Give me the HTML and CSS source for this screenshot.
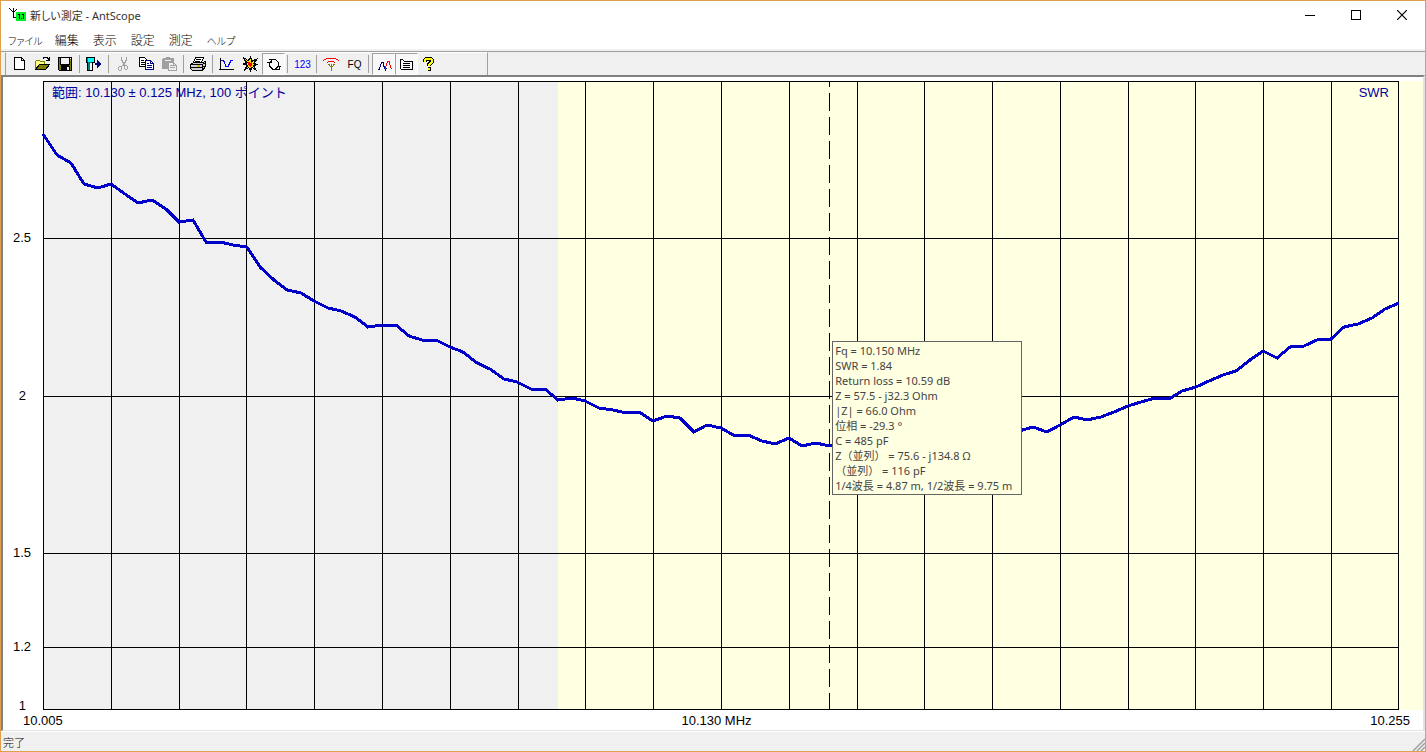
FILE: index.html
```html
<!DOCTYPE html>
<html lang="ja">
<head>
<meta charset="utf-8">
<title>新しい測定 - AntScope</title>
<link rel="stylesheet" href="styles.css">
</head>
<body>
<div class="window">
  <header class="titlebar">
    <svg class="app-icon" width="18" height="16" viewBox="0 0 18 16" shape-rendering="crispEdges" aria-hidden="true">
      <path d="M0 1h1v1h1v1h1v1h1V1h1v3h1V3h1V2h1v1H7v1H6v1H5v5h3v1H4V5H3V4H2V3H1V2H0z" fill="#000"/>
      <rect x="7" y="5" width="10" height="9" fill="#00f020"/>
      <path d="M9 7h2v5h-1V8H9zM12 11h1v1h-1zM13 7h2v5h-1V8h-1z" fill="#000"/>
    </svg>
    <h1 class="title">新しい測定 - AntScope</h1>
    <div class="window-controls">
      <button class="control" aria-label="最小化"><svg width="10" height="10" shape-rendering="crispEdges"><path d="M0 5.500h10" stroke="#000"/></svg></button>
      <button class="control" aria-label="最大化"><svg width="10" height="10" shape-rendering="crispEdges"><path d="M.5.5h9v9h-9z" fill="none" stroke="#000"/></svg></button>
      <button class="control" aria-label="閉じる"><svg width="10" height="10"><path d="M0 0l10 10M10 0L0 10" stroke="#000" stroke-width="1.200"/></svg></button>
    </div>
  </header>

  <nav class="menubar">
    <button class="menu menu-kana">ファイル</button>
    <button class="menu">編集</button>
    <button class="menu">表示</button>
    <button class="menu">設定</button>
    <button class="menu">測定</button>
    <button class="menu menu-kana">ヘルプ</button>
  </nav>

  <div class="toolbar" role="toolbar">
    <div class="toolband">
      <button class="tool" aria-label="新規"><svg class="icon" viewBox="0 0 16 16"><path d="M3.500 1.500h7l3 3v9h-10z" fill="#fff" stroke="#000"/><path d="M10.500 1.500v3h3" fill="none" stroke="#000"/></svg></button>
      <button class="tool" aria-label="開く"><svg class="icon" viewBox="0 0 16 16"><path d="M1.500 13V5.500l1-1h3l1 1h4v3h-5z" fill="#ffff80" stroke="#808000"/><path d="M1.500 13.500l4-5h10l-4 5z" fill="#808000" stroke="#000"/><path d="M9 2.500l1-1h3l2 2M15.500 1v3.500H12" fill="none" stroke="#000"/></svg></button>
      <button class="tool" aria-label="保存"><svg class="icon" viewBox="0 0 16 16"><path d="M1.500 1.500h13v13h-12l-1-1z" fill="#808000" stroke="#000"/><path d="M4 2h8v6H4z" fill="#f0f0f0"/><path d="M3.500 2v6.500h9V2M4 9.500h8" fill="none" stroke="#000"/><path d="M4 10h9v4H4z" fill="#000"/><path d="M10 11h2v3h-2zM13 2h1v1h-1z" fill="#f0f0f0"/></svg></button>
      <span class="sep"></span>
      <button class="tool" aria-label="エクスポート"><svg class="icon" viewBox="0 0 16 16"><path d="M.5 1.500h8v5h-2v8h-5v-8h-1z" fill="#008080" stroke="#000"/><path d="M2 2h6v4H2z" fill="#00ffff"/><path d="M4 7h2v7H4z" fill="#fff"/><path d="M9 7h2V4h1v1h1v1h1v1h1v2h-1v1h-1v1h-1v1h-1V9H9z" fill="#000080"/></svg></button>
      <span class="sep"></span>
      <button class="tool" aria-label="切り取り"><svg class="icon" viewBox="0 0 16 16"><path d="M6.500 1v3l4 6M11.500 1v3l-4 6" fill="none" stroke="#a0a0a0" stroke-width="1.400"/><path d="M4.500 10.500h2v3l-1 1h-1l-1-1v-2zM10.500 9.500h1l1 1v2l-1 1h-1l-1-1v-2z" fill="none" stroke="#a0a0a0"/></svg></button>
      <button class="tool" aria-label="コピー"><svg class="icon" viewBox="0 0 16 16"><path d="M1.500 1.500h5l3 3v6h-8z" fill="#fff" stroke="#000"/><path d="M3 4.500h3M3 6.500h4M3 8.500h4" stroke="#000"/><path d="M7.500 4.500h5l3 3v6h-8z" fill="#fff" stroke="#000080"/><path d="M12.500 4.500v3h3M9 7.500h2M9 9.500h5M9 11.500h5" fill="none" stroke="#000080"/></svg></button>
      <button class="tool" aria-label="貼り付け"><svg class="icon" viewBox="0 0 16 16"><path d="M1 3l1-1h3V1h4v1h3l1 1v10H1z" fill="#a0a0a0"/><path d="M4 4.500h6" stroke="#f0f0f0"/><path d="M7.500 6.500h5l3 3v5h-8z" fill="#f0f0f0" stroke="#a0a0a0"/><path d="M9 9.500h3M9 11.500h5M12.500 7v2.500h3" fill="none" stroke="#a0a0a0"/></svg></button>
      <span class="sep"></span>
      <button class="tool" aria-label="印刷"><svg class="icon" viewBox="0 0 16 16"><path d="M5.500 1.500h8l-2 5h-8z" fill="#fff" stroke="#000"/><path d="M6 3.500h5M5 5.500h5" stroke="#000"/><path d="M.5 8.500l3-2h9l3-1v5l-3 4h-10l-2-2z" fill="#d0d0d0" stroke="#000"/><path d="M1 8.500h11.500v5M1 11.500h12M12.500 8.500l3-2M12.500 11.500l3-2" fill="none" stroke="#000"/><path d="M7 10h3" stroke="#d0c000" stroke-width="2"/></svg></button>
      <span class="sep"></span>
      <button class="tool" aria-label="グラフ"><svg class="icon" viewBox="0 0 16 16"><path d="M1.500 2v12M0 13.500h15" stroke="#000"/><path d="M2 4.500h2l1 1 2 5h2l3-6h2" fill="none" stroke="#0000ff"/></svg></button>
      <button class="tool" aria-label="測定開始"><svg class="icon" viewBox="0 0 16 16"><path d="M1 1l5 4 2.500-4L10 5l5-2-2.500 4 2.500 1.500-3 1.500 2 4-4-2.500L8.500 15 7 11.500 2.500 14 5 9.500 1.500 8 4 6.500z" fill="#000" stroke="#000"/><path d="M2.500 2.500L6 6l2.500-3.500L9.500 6l3.500-1.500-2 3L13 9l-2.500.5 1.500 3-3-2-1 2.500-1-2.500L5 12l1.500-3L4 8l1.500-1.500z" fill="#ffe000"/><path d="M6 6h1l1 1 2-1v3l-2 2-2-2z" fill="#ff0000"/></svg></button>
      <button class="tool pressed" aria-label="連続測定" aria-pressed="true"><svg class="icon" viewBox="0 0 16 16"><path d="M3.500 10V6.500l3-3h3l3 3V10l-3 3h-3zM1 6.500h4M14.500 10.500h-4M9.500 13.500h4v-3M2.500 3.500h3v3" fill="none" stroke="#000"/></svg></button>
      <span class="sep"></span>
      <button class="tool tool-number">123</button>
      <span class="sep"></span>
      <button class="tool" aria-label="アンテナ"><svg class="icon" viewBox="0 0 16 16"><path d="M.5 5l1-1.500L4 2.500h8l2.500 1L15.500 5M3.500 7.500l1-1 1.500-1h4l1.500 1 1 1" fill="none" stroke="#ff0000"/><path d="M8.500 8v7M5.500 8l3 3.500 3-3.500" fill="none" stroke="#808000"/></svg></button>
      <button class="tool">FQ</button>
      <span class="sep"></span>
      <button class="tool pressed" aria-label="曲線" aria-pressed="true"><svg class="icon" viewBox="0 0 16 16"><path d="M8.500 13l1-1 2-6.500h2l1 6 1 1.500" fill="none" stroke="#ff0000"/><path d="M2.500 14l1-1 2-6.500h1.500l1.500 6 1 1.500 1-2" fill="none" stroke="#000080"/></svg></button>
      <button class="tool pressed" aria-label="凡例" aria-pressed="true"><svg class="icon" viewBox="0 0 16 16"><path d="M1.500 3.500v9l1 1h11v-8h-8l-2-2zM4 7.500h7M4 9.500h7M4 11.500h7" fill="none" stroke="#000"/></svg></button>
      <button class="tool" aria-label="ヘルプ"><svg class="icon" viewBox="0 0 16 16"><path d="M4 6V4l2-1.500h3L11 4v2L8 8.500V10M6.500 13h3" fill="none" stroke="#000" stroke-width="4"/><path d="M4 5.500V4l2-1.500h3L11 4v2L8 8.500V10M7 13h2" fill="none" stroke="#ffff00" stroke-width="2"/></svg></button>
    </div>
  </div>

  <main class="chart">
    <div class="y-axis">
      <span class="tick">2.5</span>
      <span class="tick">2</span>
      <span class="tick">1.5</span>
      <span class="tick">1.2</span>
      <span class="tick tick-base">1</span>
    </div>
    <div class="plot">
      <svg class="plot-lines" viewBox="0 0 1356 629" preserveAspectRatio="none" role="img" aria-label="SWR 10.005–10.255 MHz">
        <rect class="out-of-band" width="515" height="629"/>
        <path class="grid" d="M.5 0v629M68.500 0v629M136.500 0v629M203.500 0v629M271.500 0v629M339.500 0v629M407.500 0v629M475.500 0v629M542.500 0v629M610.500 0v629M678.500 0v629M746.500 0v629M814.500 0v629M881.500 0v629M949.500 0v629M1017.500 0v629M1085.500 0v629M1152.500 0v629M1220.500 0v629M1288.500 0v629M1355.500 0v629M0 .5h1356M0 157.500h1356M0 315.500h1356M0 472.500h1356M0 566.500h1356M0 628.500h1356"/>
        <path class="cursor" d="M786.500 0v629"/>
        <polyline class="curve" points="0,53 14,74 28,82 41,103 55,107 68,103 82,113 95,122 109,119 123,128 136,141 150,139 163,161 177,161 190,164 204,166 217,186 231,199 244,209 258,212 271,220 285,227 298,230 312,236 325,246 339,244 353,244 366,255 379,259 393,259 407,266 420,271 434,282 447,288 461,298 474,301 488,308 502,308 515,319 529,317 542,320 556,327 570,329 583,332 596,331 610,340 624,335 637,337 651,351 664,344 678,347 692,355 705,354 719,360 732,363 746,357 759,365 773,362 786,365 976,350 990,346 1004,351 1017,344 1031,336 1044,339 1058,336 1071,331 1085,325 1098,321 1112,317 1126,318 1139,310 1153,306 1166,300 1180,294 1193,290 1207,279 1220,270 1234,277 1247,266 1261,265 1274,259 1288,258 1301,246 1315,243 1329,237 1342,228 1356,222"/>
      </svg>
      <div class="caption">
        <span>範囲: 10.130 ± 0.125 MHz, 100 ポイント</span>
        <span>SWR</span>
      </div>
      <div class="tooltip" role="tooltip">
        <div>Fq = 10.150 MHz</div>
        <div>SWR = 1.84</div>
        <div>Return loss = 10.59 dB</div>
        <div>Z = 57.5 - j32.3 Ohm</div>
        <div>|Z| = 66.0 Ohm</div>
        <div>位相 = -29.3 °</div>
        <div>C = 485 pF</div>
        <div>Z（並列） = 75.6 - j134.8 Ω</div>
        <div>（並列） = 116 pF</div>
        <div>1/4波長 = 4.87 m, 1/2波長 = 9.75 m</div>
      </div>
    </div>
    <div class="plot-margin"></div>
    <div class="x-axis">
      <span>10.005</span>
      <span>10.130 MHz</span>
      <span>10.255</span>
    </div>
  </main>

  <footer class="statusbar">
    <span>完了</span>
    <svg class="grip" width="13" height="13" viewBox="0 0 13 13" aria-hidden="true"><path d="M1 13L13 1M5 13l8-8M9 13l4-4" stroke="#a0a0a0" stroke-width="1.500"/></svg>
  </footer>
</div>
</body>
</html>
```
FILE: styles.css
```css
* {
  box-sizing: border-box;
}

body {
  margin: 0;
  font-family: "Noto Sans", "Noto Sans CJK JP", sans-serif;
  font-size: 12px;
  font-weight: 300;
  color: #000;
}

button {
  border: 0;
  padding: 0;
  background: none;
  font: inherit;
  color: inherit;
}

svg {
  display: block;
}

.window {
  display: flex;
  flex-direction: column;
  min-height: 100vh;
  border: 1px solid #dfa04b;
  background: #f0f0f0;
}

.titlebar {
  display: flex;
  align-items: center;
  height: 28px;
  padding-left: 8px;
  background: #fff;
}

.app-icon {
  margin-right: 3px;
}

.title {
  flex: 1;
  margin: 0;
  font-size: 11px;
  font-weight: 400;
  font-feature-settings: "palt";
  color: #333;
}

.window-controls {
  display: flex;
}

.control {
  display: flex;
  align-items: center;
  justify-content: center;
  width: 46px;
  height: 28px;
}

.menubar {
  display: flex;
  gap: 14px;
  height: 20px;
  padding-left: 7px;
  background: #fff;
}

.menu {
  padding-top: 2px;
}

.menu-kana {
  margin-right: -2px;
  font-size: 10px;
  font-feature-settings: "palt";
}

.toolbar {
  margin-top: 2px;
  padding-left: 4px;
  border-top: 1px solid #a0a0a0;
}

.toolband {
  display: flex;
  width: 483px;
  height: 23px;
  padding-left: 2px;
  border-top: 1px solid #fff;
  border-left: 1px solid #a0a0a0;
  border-right: 1px solid #a0a0a0;
}

.tool {
  flex: none;
  width: 23px;
  height: 22px;
  font-family: "Liberation Sans", sans-serif;
  font-size: 10px;
}

.tool-number {
  color: #0000ff;
}

.tool .icon {
  width: 16px;
  height: 16px;
  margin-left: 3px;
  shape-rendering: crispEdges;
}

.pressed {
  border: 1px solid #fff;
  border-top-color: #a0a0a0;
  border-left-color: #a0a0a0;
  background: #f8f8f8;
}

.sep {
  flex: none;
  width: 6px;
  height: 18px;
  margin-top: 2px;
  background: linear-gradient(#a0a0a0, #a0a0a0) 2px 0 / 1px 100% no-repeat;
}

.chart {
  flex: 1;
  display: grid;
  grid-template-columns: 40px 1fr 24px;
  grid-template-rows: 1fr 20px;
  padding-top: 4px;
  border: 1px solid #a0a0a0;
  border-width: 2px 2px 1px;
  border-color: #808080 #e3e3e3 #e3e3e3 #808080;
  background: #fff;
  font-family: "Liberation Sans", "Noto Sans CJK JP", sans-serif;
  font-size: 13px;
  font-weight: 400;
  line-height: 16px;
}

.y-axis {
  display: grid;
  grid-template-rows: 157fr 158fr 157fr 94fr 63fr;
}

.tick {
  align-self: end;
  padding-right: 12px;
  margin-bottom: -8px;
  text-align: right;
}

.tick:nth-child(2) {
  padding-right: 17px;
}

.tick-base {
  padding-right: 17px;
  margin-bottom: -4px;
}

.plot {
  position: relative;
  background: #ffffe1;
}

.plot-lines {
  position: absolute;
  width: 100%;
  height: 100%;
  shape-rendering: crispEdges;
  overflow: visible;
}

.out-of-band {
  fill: #f0f0f0;
}

.grid,
.cursor,
.curve {
  fill: none;
  stroke: #000;
  vector-effect: non-scaling-stroke;
}

.cursor {
  stroke-dasharray: 18 6;
  stroke-dashoffset: 12;
}

.curve {
  stroke: #0000c8;
  stroke-width: 3;
}

.caption {
  position: relative;
  display: flex;
  justify-content: space-between;
  padding: 4px 10px 0 9px;
  color: #0000a0;
}

.tooltip {
  position: absolute;
  left: 58.2%;
  top: 41.3%;
  min-width: 190px;
  padding: 1px 2px;
  border: 1px solid #646464;
  background: #ffffe1;
  font-family: "Noto Sans", "Noto Sans CJK JP", sans-serif;
  font-size: 11px;
  line-height: 15px;
  white-space: nowrap;
  color: #444;
}

.plot-margin {
  background: #ffffe1;
}

.x-axis {
  grid-column: 1 / -1;
  display: grid;
  grid-template-columns: 1fr auto 1fr;
  padding: 3px 13px 0 20px;
}

.x-axis span:last-child {
  text-align: right;
}

.statusbar {
  display: flex;
  justify-content: space-between;
  align-items: center;
  height: 20px;
  padding-left: 2px;
  border-top: 1px solid #fff;
  font-size: 11px;
}

.grip {
  align-self: end;
}
```
